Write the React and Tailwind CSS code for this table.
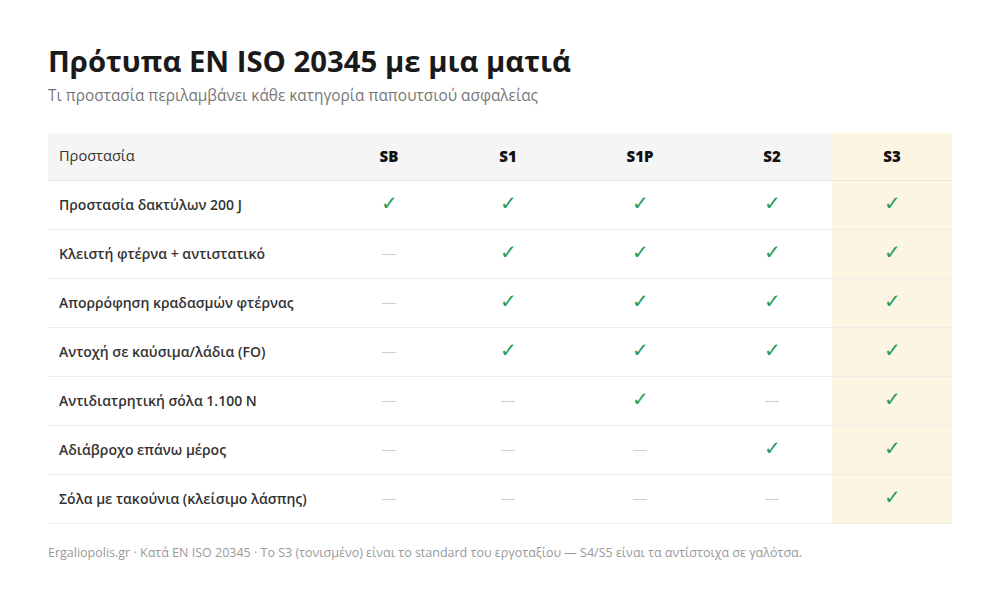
const levels = ['SB', 'S1', 'S1P', 'S2', 'S3']

// each row: label + which levels cover it (same order as `levels`)
const rows = [
  ['Προστασία δακτύλων 200 J', [1, 1, 1, 1, 1]],
  ['Κλειστή φτέρνα + αντιστατικό', [0, 1, 1, 1, 1]],
  ['Απορρόφηση κραδασμών φτέρνας', [0, 1, 1, 1, 1]],
  ['Αντοχή σε καύσιμα/λάδια (FO)', [0, 1, 1, 1, 1]],
  ['Αντιδιατρητική σόλα 1.100 N', [0, 0, 1, 0, 1]],
  ['Αδιάβροχο επάνω μέρος', [0, 0, 0, 1, 1]],
  ['Σόλα με τακούνια (κλείσιμο λάσπης)', [0, 0, 0, 0, 1]],
]

const colWidths = ['w-[118px]', 'w-[120px]', 'w-[144px]', 'w-[120px]', 'w-[120px]']

function Mark({ on }) {
  if (on) return <span className="text-[20px] leading-none text-[#2a9d5c]">✓</span>
  return <span className="inline-block h-px w-[14px] bg-[#cfcfcf] align-middle" />
}

export default function App() {
  return (
    <div
      className="min-h-[594px] w-[1000px] bg-white px-12 pt-[41px] text-[#222]"
      style={{ fontFamily: '"Open Sans", "Noto Sans", sans-serif' }}
    >
      <h1 className="text-[29.3px] font-bold leading-[40px] text-[#1a1a1a]">
        Πρότυπα EN ISO 20345 με μια ματιά
      </h1>
      <p className="mt-[5px] text-[15.4px] leading-5 text-[#777]">
        Τι προστασία περιλαμβάνει κάθε κατηγορία παπουτσιού ασφαλείας
      </p>

      <table className="mt-[27px] w-[904px] table-fixed border-collapse text-[14.6px]">
        <colgroup>
          <col className="w-[282px]" />
          {colWidths.map((w, i) => (
            <col key={i} className={w} />
          ))}
        </colgroup>
        <thead>
          <tr className="h-[47px] border-b border-[#e8e8e8]">
            <th className="bg-[#f5f5f5] px-[11px] text-left font-normal text-[#333]">Προστασία</th>
            {levels.map((l) => (
              <th
                key={l}
                className={
                  'text-center text-[15px] font-black text-[#111] ' +
                  (l === 'S3' ? 'bg-[#fdf5e3]' : 'bg-[#f5f5f5]')
                }
              >
                {l}
              </th>
            ))}
          </tr>
        </thead>
        <tbody>
          {rows.map(([label, marks]) => (
            <tr key={label} className="h-[49px] border-b border-[#ececec]">
              <td className="px-[11px] text-[14px] font-semibold text-[#333]">{label}</td>
              {marks.map((m, i) => (
                <td key={i} className={'text-center ' + (i === 4 ? 'bg-[#fdf5e3]' : '')}>
                  <Mark on={m} />
                </td>
              ))}
            </tr>
          ))}
        </tbody>
      </table>

      <p className="mt-[20px] text-[12.5px] text-[#999]">
        Ergaliopolis.gr · Κατά EN ISO 20345 · Το S3 (τονισμένο) είναι το standard του εργοταξίου — S4/S5 είναι τα αντίστοιχα σε γαλότσα.
      </p>
    </div>
  )
}
